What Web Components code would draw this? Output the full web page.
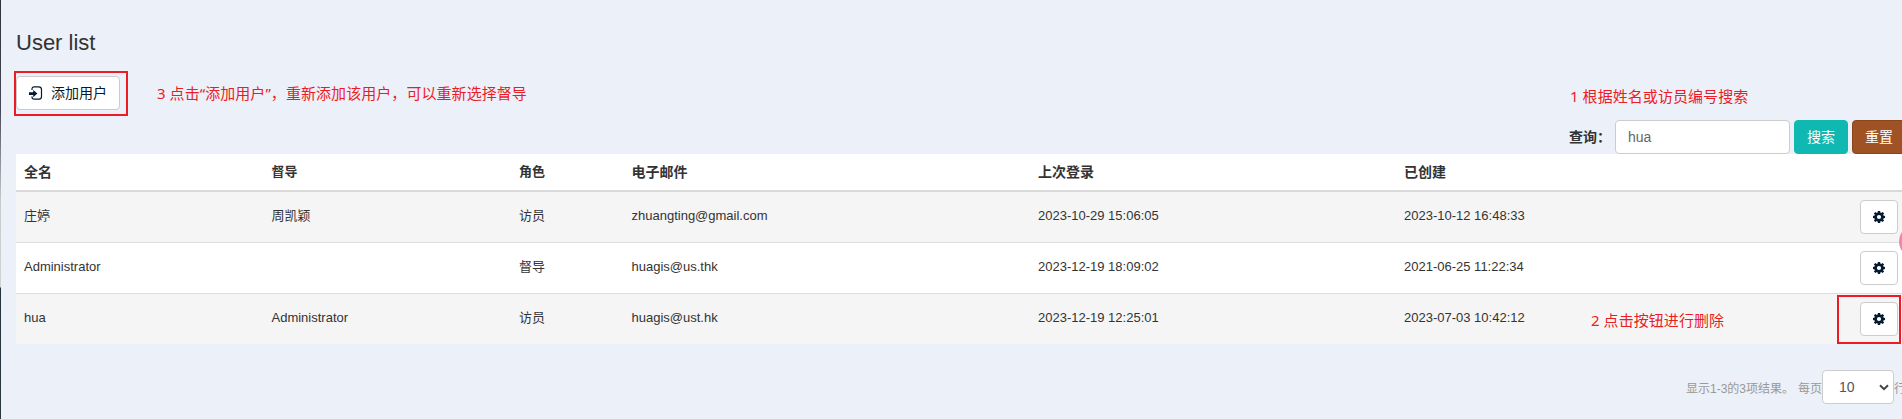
<!DOCTYPE html>
<html lang="zh-CN">
<head>
<meta charset="utf-8">
<title>User list</title>
<style>
html,body{margin:0;height:100%;overflow:hidden}
body{background:#ecf0f8;font-family:"Liberation Sans","Noto Sans CJK SC",sans-serif;font-size:13px;color:#333}
</style>
</head>
<body>
<user-page></user-page>
<script>
const define=(name,html,setup)=>customElements.define(name,class extends HTMLElement{
  constructor(){
    super();
    const t=document.createElement('template');
    t.innerHTML=html;
    this.attachShadow({mode:'open'}).append(t.content.cloneNode(true));
    if(setup)setup(this);
  }
});

define('gear-icon',`<style>:host{display:block;width:12px;height:12px}svg{display:block}</style>
<svg width="12" height="12" viewBox="0 0 12 12"><path fill="#031a30" fill-rule="evenodd" d="M4.9 0h2.2l.3 1.6.8.3L9.6.9 11.1 2.4l-1 1.4.3.8L12 4.9v2.2l-1.6.3-.3.8 1 1.4-1.5 1.5-1.4-1-.8.3L7.1 12H4.900l-.3-1.600-.8-.3-1.400 1L.9 9.600l1-1.400-.3-.8L0 7.100V4.900l1.600-.3.3-.8-1-1.400L2.400.9l1.400 1 .8-.3zM6 3.900a2.100 2.100 0 1 0 0 4.200 2.100 2.100 0 0 0 0-4.200z"/></svg>`);

define('enter-icon',`<style>:host{display:block;width:14px;height:14px}svg{display:block}</style>
<svg width="14" height="14" viewBox="0 0 14 14"><path fill="none" stroke="#031a30" stroke-width="1.2" d="M3 4V3Q3 .8 5.2.8H9.6Q12.5.8 12.5 3.6V10.4Q12.5 13.2 9.6 13.2H5.2Q3 13.2 3 11V10.400"/><path fill="#031a30" d="M0 6.200h4.200V4L8.400 7.600 4.200 11.200V9H0z"/></svg>`);

define('ui-button',`<style>
:host{display:flex;box-sizing:border-box;height:34px;padding:0 12px;align-items:center;justify-content:center;gap:8px;border:1px solid #ccc;border-radius:4px;background:#fff;color:#031a30;font-size:14px;line-height:20px;white-space:nowrap;flex:none}
:host([kind=search]){background:#0fb8b1;border-color:#0fb8b1;color:#fff}
:host([kind=reset]){background:#9f5224;border-color:#8b451b;color:#fff}
</style><slot></slot>`);

define('red-note',`<style>
:host{display:block;color:#ec1c24;font:15px/20px "Noto Sans","Noto Sans CJK SC",sans-serif;letter-spacing:.06px;white-space:nowrap}
</style><slot></slot>`);

define('red-frame',`<style>
:host{display:block;position:absolute;box-sizing:border-box;border:2px solid #ed1c24;pointer-events:none}
</style>`);

define('user-row',`<style>
:host{display:grid;grid-template-columns:247.5px 247.5px 112.5px 406.5px 366px 1fr 46px;height:50px;border-top:1px solid #ddd;background:#fff}
:host([odd]){background:#f5f5f5}
:host([first]){border-top:0}
::slotted(span){padding:14px 0 0 8px;line-height:19px;white-space:nowrap}
.act{position:relative;grid-column:7;grid-row:1;padding:8px 0 0 4px}
ui-button{width:38px}
</style><slot></slot><div class="act"><ui-button><gear-icon></gear-icon></ui-button><slot name="mark"></slot></div>`);

define('user-table',`<style>
:host{display:block;width:1886px}
.head{display:grid;grid-template-columns:247.5px 247.5px 112.5px 406.5px 366px 1fr;height:36px;border-bottom:2px solid #d9d9d9;background:#fff;align-items:center}
.head span{padding-left:8px;line-height:20px;font-weight:bold}
.head .l{font-size:14px}
</style>
<div class="head"><span class="l">全名</span><span>督导</span><span>角色</span><span class="l">电子邮件</span><span class="l">上次登录</span><span class="l">已创建</span></div>
<slot></slot>`);

define('search-bar',`<style>
:host{display:flex;height:34px;margin-left:1569px;align-items:center;white-space:nowrap}
label{font-size:14px;font-weight:bold;width:46px;flex:none;position:relative;top:-1px}
input{box-sizing:border-box;width:175px;height:34px;border:1px solid #ccc;border-radius:4px;padding:0 12px;font:14px "Liberation Sans",sans-serif;color:#666;background:#fff;margin:0 4px 0 0;flex:none}
ui-button{width:54px;margin-right:4px}
</style><label>查询：</label><input value="hua"><ui-button kind="search">搜索</ui-button><ui-button kind="reset">重置</ui-button>`);

define('page-footer',`<style>
:host{display:flex;height:34px;margin:26px 0 0 1686px;align-items:center;color:#999;font-size:12px;white-space:nowrap}
.sum{width:112px;flex:none}.per{width:24px;flex:none}
.sel{box-sizing:border-box;width:72px;height:34px;flex:none;display:flex;align-items:center;justify-content:space-between;padding:0 4px 0 16px;border:1px solid #ccc;border-radius:4px;background:#fff;color:#555;font-size:14px}
</style><span class="sum">显示1-3的3项结果。</span><span class="per">每页</span><div class="sel"><span>10</span><svg width="10" height="7" viewBox="0 0 10 7"><path d="M1 1.2 5 5.2 9 1.2" fill="none" stroke="#444" stroke-width="2"/></svg></div><span>行</span>`);

define('user-page',`<style>
:host{display:block;position:relative;width:1902px;height:419px;overflow:hidden}
.strip{position:absolute;left:0;top:0;width:1px;height:419px;background:linear-gradient(#30323f 0,#454754 110px,#c8c9cc 200px,#d2d3d4 287px,#26323e 288px,#2b3740 419px)}
h1{margin:0;padding:29px 0 0 16px;height:47px;font-size:22px;line-height:28px;font-weight:400}
.bar{display:flex;padding-left:16px;height:44px}
.add{position:relative;width:104px}
.n3{margin:7px 0 0 37px}
.n1{margin:10px 0 0 auto;width:332px}
user-table{margin-left:16px}
.n2{position:absolute;left:1591px;top:310px}
.dot{position:absolute;left:1899px;top:225px;width:33px;height:33px;border-radius:50%;background:#ee86b0}
</style>
<h1>User list</h1>
<div class="bar"><div class="add"><ui-button><enter-icon></enter-icon><span>添加用户</span></ui-button><red-frame style="left:-2px;top:-5px;width:114px;height:45px"></red-frame></div>
<red-note class="n3">3 点击“添加用户”，重新添加该用户，可以重新选择督导</red-note><red-note class="n1">1 根据姓名或访员编号搜索</red-note></div>
<search-bar></search-bar>
<user-table>
<user-row odd first><span>庄婷</span><span>周凯颖</span><span>访员</span><span>zhuangting@gmail.com</span><span>2023-10-29 15:06:05</span><span>2023-10-12 16:48:33</span></user-row>
<user-row><span>Administrator</span><span></span><span>督导</span><span>huagis@us.thk</span><span>2023-12-19 18:09:02</span><span>2021-06-25 11:22:34</span></user-row>
<user-row odd><span>hua</span><span>Administrator</span><span>访员</span><span>huagis@ust.hk</span><span>2023-12-19 12:25:01</span><span>2023-07-03 10:42:12</span><red-frame slot="mark" style="left:-19px;top:1px;width:64px;height:49px"></red-frame></user-row>
</user-table>
<page-footer></page-footer>
<red-note class="n2">2 点击按钮进行删除</red-note>
<div class="dot"></div><div class="strip"></div>`);
</script>
</body>
</html>
